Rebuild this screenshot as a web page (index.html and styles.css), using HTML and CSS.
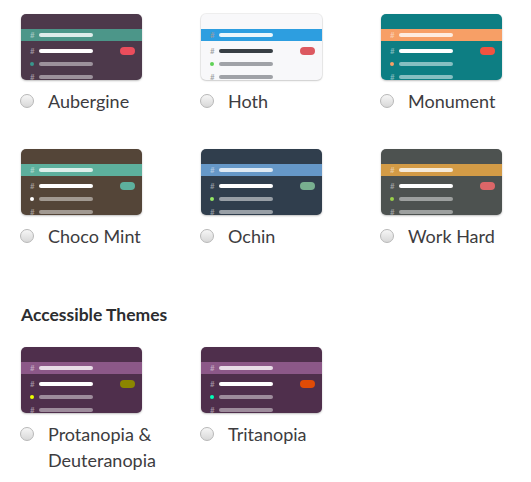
FILE: index.html
```html
<!DOCTYPE html>
<html>
<head>
<meta charset="utf-8">
<link rel="stylesheet" href="styles.css">
</head>
<body>
<div class="page">
  <div class="grid">
    <div class="theme t-aubergine">
      <div class="card">
        <div class="top"></div>
        <div class="hl"><span class="hash">#</span><span class="bar"></span></div>
        <div class="row"><span class="hash">#</span><span class="bar white"></span><span class="badge"></span></div>
        <div class="row"><span class="dot"></span><span class="bar"></span></div>
        <div class="row"><span class="hash">#</span><span class="bar"></span></div>
      </div>
      <label class="opt"><span class="radio"></span><span class="name">Aubergine</span></label>
    </div>
    <div class="theme t-hoth">
      <div class="card">
        <div class="top"></div>
        <div class="hl"><span class="hash">#</span><span class="bar"></span></div>
        <div class="row"><span class="hash">#</span><span class="bar white"></span><span class="badge"></span></div>
        <div class="row"><span class="dot"></span><span class="bar"></span></div>
        <div class="row"><span class="hash">#</span><span class="bar"></span></div>
      </div>
      <label class="opt"><span class="radio"></span><span class="name">Hoth</span></label>
    </div>
    <div class="theme t-monument">
      <div class="card">
        <div class="top"></div>
        <div class="hl"><span class="hash">#</span><span class="bar"></span></div>
        <div class="row"><span class="hash">#</span><span class="bar white"></span><span class="badge"></span></div>
        <div class="row"><span class="dot"></span><span class="bar"></span></div>
        <div class="row"><span class="hash">#</span><span class="bar"></span></div>
      </div>
      <label class="opt"><span class="radio"></span><span class="name">Monument</span></label>
    </div>
    <div class="theme t-choco">
      <div class="card">
        <div class="top"></div>
        <div class="hl"><span class="hash">#</span><span class="bar"></span></div>
        <div class="row"><span class="hash">#</span><span class="bar white"></span><span class="badge"></span></div>
        <div class="row"><span class="dot"></span><span class="bar"></span></div>
        <div class="row"><span class="hash">#</span><span class="bar"></span></div>
      </div>
      <label class="opt"><span class="radio"></span><span class="name">Choco Mint</span></label>
    </div>
    <div class="theme t-ochin">
      <div class="card">
        <div class="top"></div>
        <div class="hl"><span class="hash">#</span><span class="bar"></span></div>
        <div class="row"><span class="hash">#</span><span class="bar white"></span><span class="badge"></span></div>
        <div class="row"><span class="dot"></span><span class="bar"></span></div>
        <div class="row"><span class="hash">#</span><span class="bar"></span></div>
      </div>
      <label class="opt"><span class="radio"></span><span class="name">Ochin</span></label>
    </div>
    <div class="theme t-workhard">
      <div class="card">
        <div class="top"></div>
        <div class="hl"><span class="hash">#</span><span class="bar"></span></div>
        <div class="row"><span class="hash">#</span><span class="bar white"></span><span class="badge"></span></div>
        <div class="row"><span class="dot"></span><span class="bar"></span></div>
        <div class="row"><span class="hash">#</span><span class="bar"></span></div>
      </div>
      <label class="opt"><span class="radio"></span><span class="name">Work Hard</span></label>
    </div>
  </div>

  <h3 class="heading">Accessible Themes</h3>

  <div class="grid">
    <div class="theme t-protanopia">
      <div class="card">
        <div class="top"></div>
        <div class="hl"><span class="hash">#</span><span class="bar"></span></div>
        <div class="row"><span class="hash">#</span><span class="bar white"></span><span class="badge"></span></div>
        <div class="row"><span class="dot"></span><span class="bar"></span></div>
        <div class="row"><span class="hash">#</span><span class="bar"></span></div>
      </div>
      <label class="opt"><span class="radio"></span><span class="name">Protanopia &amp; Deuteranopia</span></label>
    </div>
    <div class="theme t-tritanopia">
      <div class="card">
        <div class="top"></div>
        <div class="hl"><span class="hash">#</span><span class="bar"></span></div>
        <div class="row"><span class="hash">#</span><span class="bar white"></span><span class="badge"></span></div>
        <div class="row"><span class="dot"></span><span class="bar"></span></div>
        <div class="row"><span class="hash">#</span><span class="bar"></span></div>
      </div>
      <label class="opt"><span class="radio"></span><span class="name">Tritanopia</span></label>
    </div>
  </div>
</div>
</body>
</html>
```

FILE: styles.css
```css
html, body {
  margin: 0;
  padding: 0;
  background: #ffffff;
}

body {
  font-family: Lato, "Liberation Sans", sans-serif;
  color: #3d3c40;
}

.page {
  padding: 14px 0 0 21px;
}

.grid {
  display: grid;
  grid-template-columns: 180px 180px 150px;
  row-gap: 35px;
}

.theme {
  display: flex;
  flex-direction: column;
}

.card {
  width: 121px;
  height: 66px;
  border-radius: 5px;
  overflow: hidden;
  box-shadow: 0 1px 2px rgba(0, 0, 0, 0.25);
  background: var(--bg);
  display: flex;
  flex-direction: column;
}

.top {
  width: 39px;
  height: 3px;
  margin: 10px 0 0 9px;
  border-radius: 2px;
  background: var(--muted);
}

.hl,
.row {
  display: flex;
  align-items: center;
  flex-shrink: 0;
  padding: 0 7px 0 9px;
}

.hl {
  height: 12px;
  margin-top: 5px;
  margin-bottom: 3px;
  background: var(--hl);
}

.row {
  height: 13px;
}

.hash {
  width: 9px;
  font-size: 8px;
  line-height: 8px;
  color: var(--hash);
}

.bar {
  width: 54px;
  height: 4px;
  border-radius: 2px;
  background: var(--muted);
}

.hl .bar {
  background: var(--hlbar);
}

.bar.white {
  background: var(--strong);
}

.badge {
  margin-left: auto;
  width: 15px;
  height: 8px;
  border-radius: 4px;
  background: var(--badge);
}

.dot {
  width: 4px;
  height: 4px;
  margin-right: 5px;
  border-radius: 50%;
  background: var(--dot);
}

.opt {
  display: flex;
  align-items: flex-start;
  margin-top: 8px;
  font-size: 18px;
  line-height: 26px;
}

.radio {
  flex-shrink: 0;
  width: 12px;
  height: 12px;
  margin: 6px 14px 0 -1px;
  border-radius: 50%;
  border: 1px solid #b8b8b8;
  background: linear-gradient(#f6f6f6, #d8d8d8);
}

.name {
  width: 130px;
}

.heading {
  margin: 56px 0 22px;
  font-size: 17.5px;
  line-height: 20px;
  font-weight: 700;
  color: #2c2d30;
}

/* themes */
.t-aubergine {
  --bg: #4d394b;
  --hl: #4c9689;
  --hlbar: rgba(255, 255, 255, 0.82);
  --muted: rgba(255, 255, 255, 0.45);
  --hash: rgba(255, 255, 255, 0.5);
  --strong: #ffffff;
  --badge: #eb4d5c;
  --dot: #38978d;
}

.t-hoth {
  --bg: #f8f8fa;
  --hl: #2d9ee0;
  --hlbar: rgba(255, 255, 255, 0.9);
  --muted: #a0a2a7;
  --hash: #9a9ca0;
  --strong: #383f45;
  --badge: #dc5960;
  --dot: #60d156;
}

.t-hoth .card {
  box-shadow: 0 0 0 1px rgba(0, 0, 0, 0.06), 0 1px 2px rgba(0, 0, 0, 0.15);
}

.t-monument {
  --bg: #0d7e83;
  --hl: #f79f66;
  --hlbar: rgba(255, 255, 255, 0.8);
  --muted: rgba(255, 255, 255, 0.5);
  --hash: rgba(255, 255, 255, 0.5);
  --strong: #ffffff;
  --badge: #f15340;
  --dot: #f79f66;
}

.t-choco {
  --bg: #544538;
  --hl: #5db09d;
  --hlbar: rgba(255, 255, 255, 0.8);
  --muted: rgba(255, 255, 255, 0.45);
  --hash: rgba(255, 255, 255, 0.5);
  --strong: #ffffff;
  --badge: #5db09d;
  --dot: #ffffff;
}

.t-ochin {
  --bg: #303e4d;
  --hl: #6698c8;
  --hlbar: rgba(255, 255, 255, 0.8);
  --muted: rgba(255, 255, 255, 0.5);
  --hash: rgba(255, 255, 255, 0.5);
  --strong: #ffffff;
  --badge: #78af8f;
  --dot: #94e864;
}

.t-workhard {
  --bg: #4d5250;
  --hl: #d39b46;
  --hlbar: rgba(255, 255, 255, 0.8);
  --muted: rgba(255, 255, 255, 0.45);
  --hash: rgba(255, 255, 255, 0.5);
  --strong: #ffffff;
  --badge: #db6668;
  --dot: #99d04a;
}

.t-protanopia {
  --bg: #4f2f4c;
  --hl: #8c5888;
  --hlbar: rgba(255, 255, 255, 0.8);
  --muted: rgba(255, 255, 255, 0.45);
  --hash: rgba(255, 255, 255, 0.5);
  --strong: #ffffff;
  --badge: #8b8600;
  --dot: #eaff00;
}

.t-tritanopia {
  --bg: #4f2f4c;
  --hl: #8c5888;
  --hlbar: rgba(255, 255, 255, 0.8);
  --muted: rgba(255, 255, 255, 0.45);
  --hash: rgba(255, 255, 255, 0.5);
  --strong: #ffffff;
  --badge: #e04b06;
  --dot: #00ffb7;
}
```
